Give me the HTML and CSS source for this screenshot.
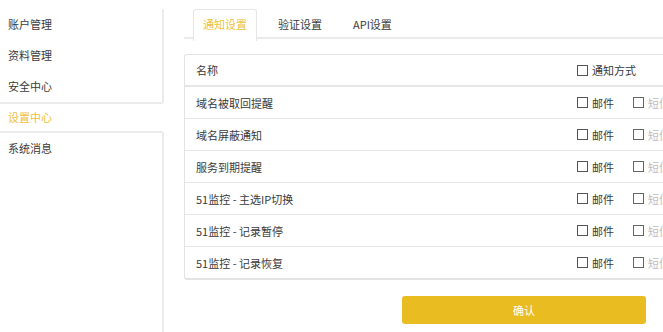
FILE: index.html
```html
<!DOCTYPE html>
<html lang="zh-CN">
<head>
    <meta charset="UTF-8">
    <meta name="viewport" content="width=device-width, initial-scale=1.0">
    <title>设置中心</title>
    <link rel="stylesheet" href="styles.css">
</head>
<body>
    <div class="page">
        <div class="sidebar">
            <div class="side-item">账户管理</div>
            <div class="side-item">资料管理</div>
            <div class="side-item">安全中心</div>
            <div class="side-item active">设置中心</div>
            <div class="side-item">系统消息</div>
            <div class="side-fill"></div>
        </div>

        <div class="main">
            <div class="tabs">
                <div class="tab active">通知设置</div>
                <div class="tab">验证设置</div>
                <div class="tab">API设置</div>
            </div>

            <div class="table">
                <div class="row head">
                    <div class="name">名称</div>
                    <div class="opts">
                        <label class="check"><span class="box"></span>通知方式</label>
                    </div>
                </div>
                <div class="row">
                    <div class="name">域名被取回提醒</div>
                    <div class="opts">
                        <label class="check"><span class="box"></span>邮件</label>
                        <label class="check off"><span class="box"></span>短信</label>
                    </div>
                </div>
                <div class="row">
                    <div class="name">域名屏蔽通知</div>
                    <div class="opts">
                        <label class="check"><span class="box"></span>邮件</label>
                        <label class="check off"><span class="box"></span>短信</label>
                    </div>
                </div>
                <div class="row">
                    <div class="name">服务到期提醒</div>
                    <div class="opts">
                        <label class="check"><span class="box"></span>邮件</label>
                        <label class="check off"><span class="box"></span>短信</label>
                    </div>
                </div>
                <div class="row">
                    <div class="name">51监控 - 主选IP切换</div>
                    <div class="opts">
                        <label class="check"><span class="box"></span>邮件</label>
                        <label class="check off"><span class="box"></span>短信</label>
                    </div>
                </div>
                <div class="row">
                    <div class="name">51监控 - 记录暂停</div>
                    <div class="opts">
                        <label class="check"><span class="box"></span>邮件</label>
                        <label class="check off"><span class="box"></span>短信</label>
                    </div>
                </div>
                <div class="row">
                    <div class="name">51监控 - 记录恢复</div>
                    <div class="opts">
                        <label class="check"><span class="box"></span>邮件</label>
                        <label class="check off"><span class="box"></span>短信</label>
                    </div>
                </div>
            </div>

            <div class="actions">
                <button class="confirm-btn">确认</button>
            </div>
        </div>
    </div>
</body>
</html>
```

FILE: styles.css
```css
* {
    margin: 0;
    padding: 0;
    box-sizing: border-box;
}

body {
    font-family: "Noto Sans CJK SC", "Noto Sans", sans-serif;
    font-size: 11px;
    color: #3a3a3a;
    background: #fff;
    overflow: hidden;
}

.page {
    display: flex;
    min-height: 100vh;
    width: 870px;
}

.sidebar {
    width: 164px;
    padding-top: 9px;
    display: flex;
    flex-direction: column;
    flex-shrink: 0;
}

.side-item {
    height: 31px;
    line-height: 31px;
    padding-left: 8px;
    border-right: 2px solid #ebebeb;
}

.side-item.active {
    color: #f0bf3a;
    border-right-color: transparent;
    border-top: 2px solid #ebebeb;
    border-bottom: 2px solid #ebebeb;
    line-height: 27px;
}

.side-fill {
    flex: 1;
    border-right: 2px solid #ebebeb;
}

.main {
    width: 680px;
    margin-left: 20px;
    padding-top: 9px;
}

.tabs {
    display: flex;
    gap: 11px;
    padding-left: 9px;
    border-bottom: 2px solid #ebebeb;
    height: 30px;
}

.tab {
    padding: 0 9px;
    height: 30px;
    line-height: 28px;
    border: 1px solid transparent;
    border-bottom: none;
}

.tab.active {
    color: #f0bf3a;
    background: #fff;
    border-color: #e6e6e6;
    border-radius: 3px 3px 0 0;
    margin-bottom: -2px;
    height: 32px;
}

.table {
    margin-top: 15px;
    border: 1px solid #e3e3e3;
    border-bottom-width: 2px;
    border-radius: 3px;
}

.row {
    display: flex;
    align-items: center;
    height: 32px;
    padding-left: 11px;
    border-top: 1px solid #e6e6e6;
}

.row:first-child {
    border-top: none;
}

.row.head {
    height: 31px;
    border-bottom: 1px solid #e6e6e6;
}

.name {
    width: 381px;
    flex-shrink: 0;
}

.opts {
    display: flex;
}

.check {
    width: 56px;
    display: flex;
    align-items: center;
    white-space: nowrap;
}

.box {
    width: 11px;
    height: 11px;
    border: 1px solid #555;
    margin-right: 4px;
    flex-shrink: 0;
}

.check.off {
    color: #bbb;
}

.check.off .box {
    border-color: #666;
}

.actions {
    display: flex;
    justify-content: center;
    margin-top: 16px;
}

.confirm-btn {
    width: 244px;
    height: 28px;
    border: none;
    border-radius: 3px;
    background: #e9bd22;
    color: #fff;
    font-family: inherit;
    font-size: 11px;
}
```
